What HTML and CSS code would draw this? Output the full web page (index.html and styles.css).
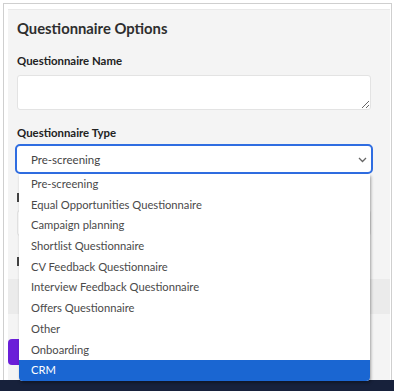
FILE: index.html
```html
<!DOCTYPE html>
<html lang="en">
<head>
  <meta charset="UTF-8" />
  <meta name="viewport" content="width=device-width, initial-scale=1" />
  <title>Questionnaire Options</title>
  <link rel="stylesheet" href="styles.css">
</head>
<body>
  <div class="page">
    <div class="frame">
      <section class="panel">
        <h2>Questionnaire Options</h2>

        <label class="label" for="q-name">Questionnaire Name</label>
        <textarea class="textarea" id="q-name"></textarea>

        <label class="label">Questionnaire Type</label>
        <div class="select-wrap">
          <div class="select">
            <span>Pre-screening</span>
            <svg class="chevron" width="9" height="6" viewBox="0 0 9 6"><polyline points="1,1 4.5,4.5 8,1" fill="none" stroke="#666" stroke-width="1.3"/></svg>
          </div>

          <ul class="dropdown">
            <li>Pre-screening</li>
            <li>Equal Opportunities Questionnaire</li>
            <li>Campaign planning</li>
            <li>Shortlist Questionnaire</li>
            <li>CV Feedback Questionnaire</li>
            <li>Interview Feedback Questionnaire</li>
            <li>Offers Questionnaire</li>
            <li>Other</li>
            <li>Onboarding</li>
            <li class="selected">CRM</li>
          </ul>
        </div>

        <!-- fields under the open list -->
        <span class="label-stub"></span>
        <div class="input"></div>
        <span class="label-stub"></span>
      </section>

      <div class="band"></div>

      <div class="footer">
        <button class="btn" aria-label="Save"></button>
      </div>
    </div>
    <div class="bottom-bar"></div>
  </div>
</body>
</html>
```

FILE: styles.css
```css
* {
  margin: 0; padding: 0; box-sizing: border-box;
}
body {
  font-family: 'Lato', 'Noto Sans', sans-serif;
  background: #fff;
  color: #262626;
}
.page {
  height: 391px;
  display: flex;
  flex-direction: column;
}
.frame {
  flex: 1;
  margin: 3px 2px 0 3px;
  border: 1px solid #cfcfcf;
  border-bottom: none;
  padding: 5px 1px 0 4px;
  display: flex;
  flex-direction: column;
}
.panel {
  background: #f4f4f4;
  border-top: 1px solid #e9e9e9;
  padding: 8px 19px 0 9px;
  height: 270px;
  display: flex;
  flex-direction: column;
}
h2 {
  font-size: 14.8px;
  line-height: 20px;
  font-weight: 700;
  color: #2e2e2e;
}
.label {
  display: block;
  font-size: 11.4px;
  line-height: 14px;
  font-weight: 700;
  color: #222;
  margin-top: 16px;
}
.textarea {
  display: block;
  margin-top: 7px;
  width: 100%;
  height: 35px;
  border: 1px solid #e3e3e3;
  border-radius: 3px;
  background: #fff;
  resize: vertical;
  font: inherit;
}
.select-wrap {
  position: relative;
  margin-top: 6px;
}
.select {
  height: 26px;
  background: #fff;
  border-radius: 3px;
  outline: 2px solid #2f6de1;
  display: flex;
  align-items: center;
  justify-content: space-between;
  padding: 0 4px 0 14px;
  font-size: 11.5px;
  color: #444;
}
.chevron {
  margin-top: 1px;
}
.dropdown {
  position: absolute;
  top: 28px;
  left: 2px;
  right: 1px;
  list-style: none;
  background: #fff;
  border-radius: 0 0 4px 4px;
  box-shadow: 1px 2px 3px rgb(0 0 0 / 0.35);
  overflow: hidden;
  z-index: 10;
}
.dropdown li {
  height: 20.7px;
  line-height: 20.7px;
  padding-left: 12px;
  font-size: 11.2px;
  color: #4a4a4a;
}
.dropdown li.selected {
  background: #1a66d2;
  color: #fff;
}
.label-stub {
  display: block;
  width: 40px;
  height: 9px;
  margin-top: 21px;
  border-left: 2px solid #444;
}
.input {
  margin-top: 8px;
  height: 26px;
  background: #fff;
  border: 1px solid #e3e3e3;
  border-radius: 3px;
}
.band {
  height: 35px;
  background: #ebebeb;
}
.footer {
  flex: 1;
  background: #f4f4f4;
  padding-top: 25px;
}
.btn {
  display: block;
  width: 80px;
  height: 26px;
  border: none;
  border-radius: 4px;
  background: #6a1ed8;
}
.bottom-bar {
  height: 11px;
  background: #17213b;
}
```
